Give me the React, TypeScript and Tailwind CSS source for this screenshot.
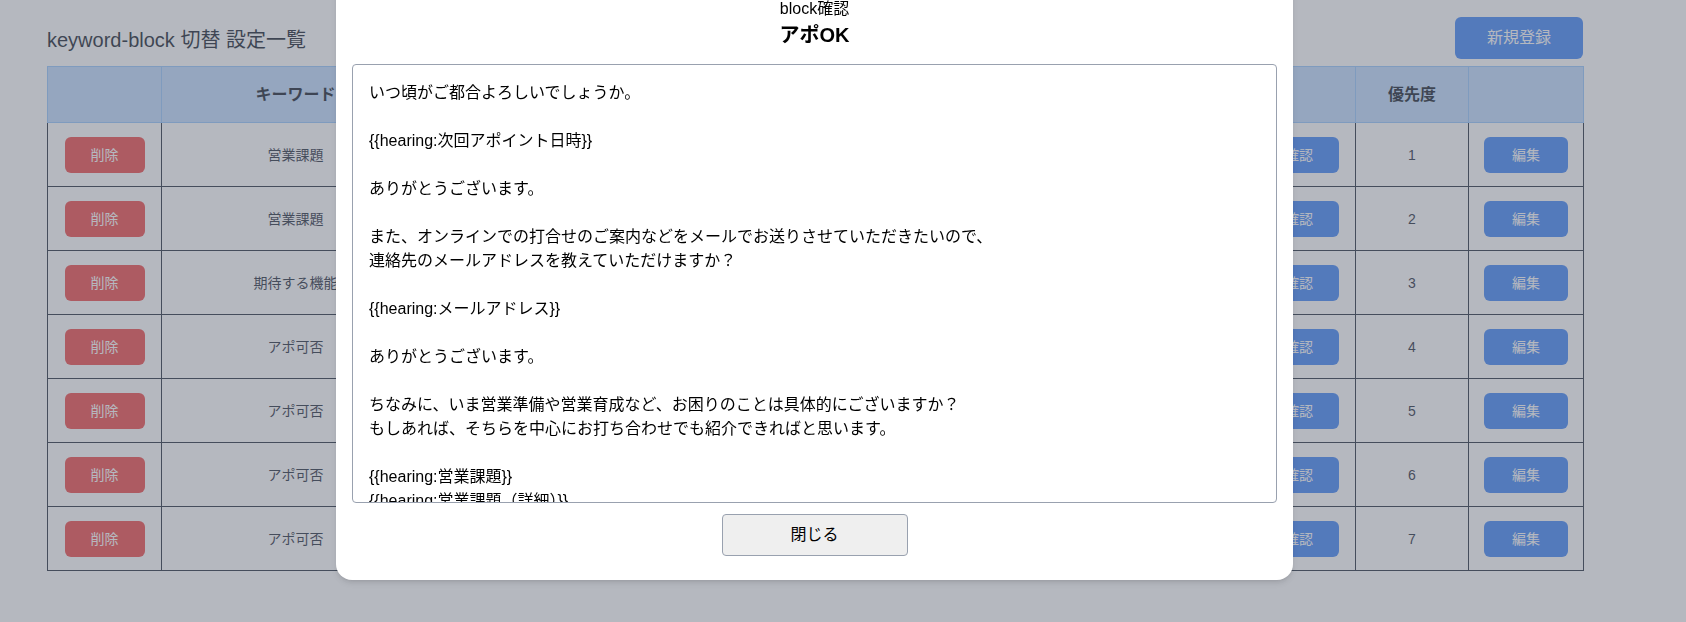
import React from 'react';

const rows = [
    { keyword: '営業課題', priority: 1 },
    { keyword: '営業課題', priority: 2 },
    { keyword: '期待する機能', priority: 3 },
    { keyword: 'アポ可否', priority: 4 },
    { keyword: 'アポ可否', priority: 5 },
    { keyword: 'アポ可否', priority: 6 },
    { keyword: 'アポ可否', priority: 7 },
];

const blockText = `いつ頃がご都合よろしいでしょうか。

{{hearing:次回アポイント日時}}

ありがとうございます。

また、オンラインでの打合せのご案内などをメールでお送りさせていただきたいので、
連絡先のメールアドレスを教えていただけますか？

{{hearing:メールアドレス}}

ありがとうございます。

ちなみに、いま営業準備や営業育成など、お困りのことは具体的にございますか？
もしあれば、そちらを中心にお打ち合わせでも紹介できればと思います。

{{hearing:営業課題}}
{{hearing:営業課題（詳細）}}
{{hearing:期待する機能}}`;

const App = () => {
    return (
        <div className="relative min-h-[622px] bg-white font-['Liberation_Sans','Noto_Sans_CJK_JP',sans-serif] text-gray-900">
            <div className="ml-[47px] w-[1536px]">
                <div className="flex items-center justify-between pt-[17px] pb-[7px]">
                    <h1 className="mt-1 text-xl leading-7 text-gray-900">keyword-block 切替 設定一覧</h1>
                    <button className="h-[42px] w-32 rounded-md bg-[#3b82f6] text-base text-white">新規登録</button>
                </div>
                <table className="w-full table-fixed border-collapse">
                    <colgroup>
                        <col className="w-[114px]" />
                        <col className="w-[268px]" />
                        <col className="w-[271px]" />
                        <col className="w-[271px]" />
                        <col className="w-[271px]" />
                        <col className="w-[113px]" />
                        <col className="w-[113px]" />
                        <col className="w-[115px]" />
                    </colgroup>
                    <thead>
                        <tr className="h-[56px] bg-[#bfdbfe]">
                            <th className="border border-[#93c5fd]"></th>
                            <th className="border border-[#93c5fd] font-bold">キーワード</th>
                            <th className="border border-[#93c5fd] font-bold">ブロック名</th>
                            <th className="border border-[#93c5fd] font-bold">切替先</th>
                            <th className="border border-[#93c5fd] font-bold">条件</th>
                            <th className="border border-[#93c5fd]"></th>
                            <th className="border border-[#93c5fd] font-bold">優先度</th>
                            <th className="border border-[#93c5fd]"></th>
                        </tr>
                    </thead>
                    <tbody>
                        {rows.map((row) => (
                            <tr key={row.priority} className="h-16 text-center text-sm text-gray-800">
                                <td className="border border-gray-800">
                                    <button className="h-9 w-20 rounded-md bg-[#ef4444] text-white">削除</button>
                                </td>
                                <td className="border border-gray-800">{row.keyword}</td>
                                <td className="border border-gray-800">アポOK</td>
                                <td className="border border-gray-800">block</td>
                                <td className="border border-gray-800">含む</td>
                                <td className="border border-gray-800">
                                    <button className="h-9 w-20 rounded-md bg-[#3b82f6] text-white">確認</button>
                                </td>
                                <td className="border border-gray-800">{row.priority}</td>
                                <td className="border border-gray-800">
                                    <button className="h-9 w-[84px] rounded-md bg-[#3b82f6] text-white">編集</button>
                                </td>
                            </tr>
                        ))}
                    </tbody>
                </table>
            </div>

            {/* modal */}
            <div className="fixed inset-0 bg-[#6b7280]/50"></div>
            <div className="fixed left-[336px] top-[-27px] flex w-[957px] flex-col rounded-2xl bg-white px-4 pt-6 pb-6 shadow-md">
                <p className="text-center text-base leading-6 text-black">block確認</p>
                <h2 className="text-center text-xl leading-7 font-bold text-black">アポOK</h2>
                <textarea
                    readOnly
                    value={blockText}
                    className="mt-[15px] h-[439px] w-full resize-none overflow-hidden rounded border border-gray-400 p-4 text-base leading-6 text-black outline-none"
                />
                <button className="mx-auto mt-[11px] h-[42px] w-[186px] rounded border border-gray-400 bg-[#efefef] text-base text-black">閉じる</button>
            </div>
        </div>
    );
};

export default App;
